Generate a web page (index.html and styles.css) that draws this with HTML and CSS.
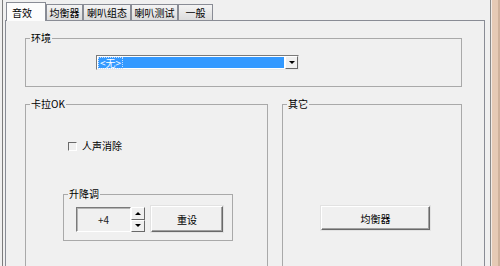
FILE: index.html
```html
<!DOCTYPE html>
<html lang="zh-CN">
<head>
<meta charset="utf-8">
<title>音效</title>
<link rel="stylesheet" href="styles.css">
</head>
<body>
<div class="win">
  <div class="main">
    <div class="tabs">
      <div class="tab sel t1">音效</div>
      <div class="tab t2">均衡器</div>
      <div class="tab t3">喇叭组态</div>
      <div class="tab t4">喇叭测试</div>
      <div class="tab t5">一般</div>
    </div>
    <div class="panel">
      <fieldset class="grp env">
        <legend>环境</legend>
        <div class="env-body">
          <div class="combo">
            <div class="combo-val"><span class="focus">&lt;无&gt;</span></div>
            <div class="combo-btn"><span class="arr-dn"></span></div>
          </div>
        </div>
      </fieldset>
      <div class="row">
        <fieldset class="grp karaoke">
          <legend>卡拉OK</legend>
          <div class="k-body">
            <div class="chk"><span class="box"></span><span class="chk-label">人声消除</span></div>
            <fieldset class="grp pitch">
              <legend>升降调</legend>
              <div class="pitch-body">
                <div class="edit">+4</div>
                <div class="spin">
                  <div class="sbtn"><span class="arr-up"></span></div>
                  <div class="sbtn"><span class="arr-dn"></span></div>
                </div>
                <div class="btn reset">重设</div>
              </div>
            </fieldset>
          </div>
        </fieldset>
        <fieldset class="grp other">
          <legend>其它</legend>
          <div class="o-body">
            <div class="btn eq">均衡器</div>
          </div>
        </fieldset>
      </div>
    </div>
  </div>
  <div class="edge"></div>
</div>
</body>
</html>
```

FILE: styles.css
```css
html, body {
  margin: 0;
  background: #f0f0f0;
}
body {
  font-family: "Noto Sans CJK SC", "Liberation Sans", sans-serif;
  font-size: 10px;
  color: #000;
}
.win {
  display: flex;
  height: 266px;
  overflow: hidden;
  padding-left: 2px;
}
.main {
  flex: none;
  width: 488px;
  box-sizing: border-box;
  border-left: 1px solid #7c7c7c;
  padding-left: 2px;
}
.tabs {
  display: flex;
  align-items: flex-end;
  height: 20px;
  padding-left: 1px;
}
.tab {
  box-sizing: border-box;
  height: 16px;
  border: 1px solid #898c95;
  border-bottom: none;
  background: linear-gradient(#f4f4f4, #dcdcdc);
  display: flex;
  align-items: center;
  justify-content: center;
  line-height: 1;
  padding-top: 1px;
  white-space: nowrap;
}
.tab.sel {
  height: 19px;
  margin-bottom: -1px;
  background: #fcfcfc;
  position: relative;
  z-index: 1;
  justify-content: flex-start;
  padding-left: 5px;
  padding-top: 2px;
}
.t1 { width: 40px; }
.t2 { width: 37px; }
.t3 { width: 48px; }
.t4 { width: 47px; }
.t5 { width: 35px; }

.panel {
  box-sizing: border-box;
  width: 480px;
  height: 246px;
  border: 1px solid #898c95;
  border-bottom: none;
  padding: 10px 22px 0 19px;
}
fieldset.grp {
  margin: 0;
  padding: 0;
  min-width: 0;
  border: 1px solid #a9a9a9;
  box-sizing: border-box;
}
legend {
  margin-left: 4px;
  padding: 0 1px;
  height: 14px;
  line-height: 14px;
}
.env-body {
  padding: 10px 0 16px 70px;
}
.combo {
  display: flex;
  box-sizing: border-box;
  width: 203px;
  height: 15px;
  border: 1px solid;
  border-color: #7a7a7a #e8e8e8 #e8e8e8 #7a7a7a;
  background: #fff;
}
.combo-val {
  flex: 1;
  margin: 1px;
  background: #3399ff;
  display: flex;
  align-items: center;
  padding-left: 1px;
}
.focus {
  color: #fff;
  line-height: 10px;
  padding: 0 1px;
  outline: 1px dotted #c8e0ff;
}
.combo-btn {
  box-sizing: border-box;
  width: 13px;
  border: 1px solid;
  border-color: #fff #696969 #696969 #fff;
  background: #f0f0f0;
  display: flex;
  align-items: center;
  justify-content: center;
}
.arr-dn, .arr-up {
  width: 0;
  height: 0;
  border-left: 3px solid transparent;
  border-right: 3px solid transparent;
}
.arr-dn { border-top: 3px solid #000; }
.arr-up { border-bottom: 3px solid #000; }

.row {
  display: flex;
  gap: 14px;
  margin-top: 10px;
}
fieldset.karaoke {
  width: 243px;
  height: 220px;
}
fieldset.other {
  width: 180px;
  height: 220px;
}
.k-body {
  padding-top: 29px;
}
.chk {
  display: flex;
  align-items: center;
  gap: 5px;
  height: 12px;
  margin-left: 42px;
  line-height: 12px;
}
.box {
  box-sizing: border-box;
  width: 9px;
  height: 9px;
  border-top: 1px solid #6a6a6a;
  border-left: 1px solid #6a6a6a;
  border-right: 1px solid #fff;
  border-bottom: 1px solid #fff;
}
fieldset.pitch {
  width: 170px;
  margin: 35px 0 0 37px;
}
.pitch-body {
  display: flex;
  align-items: flex-start;
  padding: 6px 0 8px 12px;
}
.edit {
  box-sizing: border-box;
  width: 55px;
  height: 25px;
  border: 1px solid;
  border-color: #7a7a7a #fff #fff #7a7a7a;
  box-shadow: inset 1px 1px 0 #b4b4b4;
  display: flex;
  align-items: center;
  justify-content: center;
  color: #222;
}
.spin {
  width: 14px;
  height: 25px;
  display: flex;
  flex-direction: column;
}
.sbtn {
  flex: 1;
  box-sizing: border-box;
  border: 1px solid;
  border-color: #fff #696969 #696969 #fff;
  background: #f0f0f0;
  display: flex;
  align-items: center;
  justify-content: center;
}
.btn {
  box-sizing: border-box;
  border: 1px solid;
  border-color: #fff #696969 #696969 #fff;
  box-shadow: inset -1px -1px 0 #a0a0a0, 0 0 0 1px #e2e2e2;
  background: #f0f0f0;
  display: flex;
  align-items: center;
  justify-content: center;
}
.reset {
  width: 72px;
  height: 26px;
  margin: -1px 0 0 6px;
}
.o-body {
  padding: 95px 0 0 38px;
}
.eq {
  width: 109px;
  height: 24px;
}
.edge {
  flex: none;
  width: 10px;
  background: linear-gradient(to right, #8a8a8a 0 1px, #f2ebe5 1px 2px, #e6cab5 2px 8px, #cfb29c 8px);
}
```
